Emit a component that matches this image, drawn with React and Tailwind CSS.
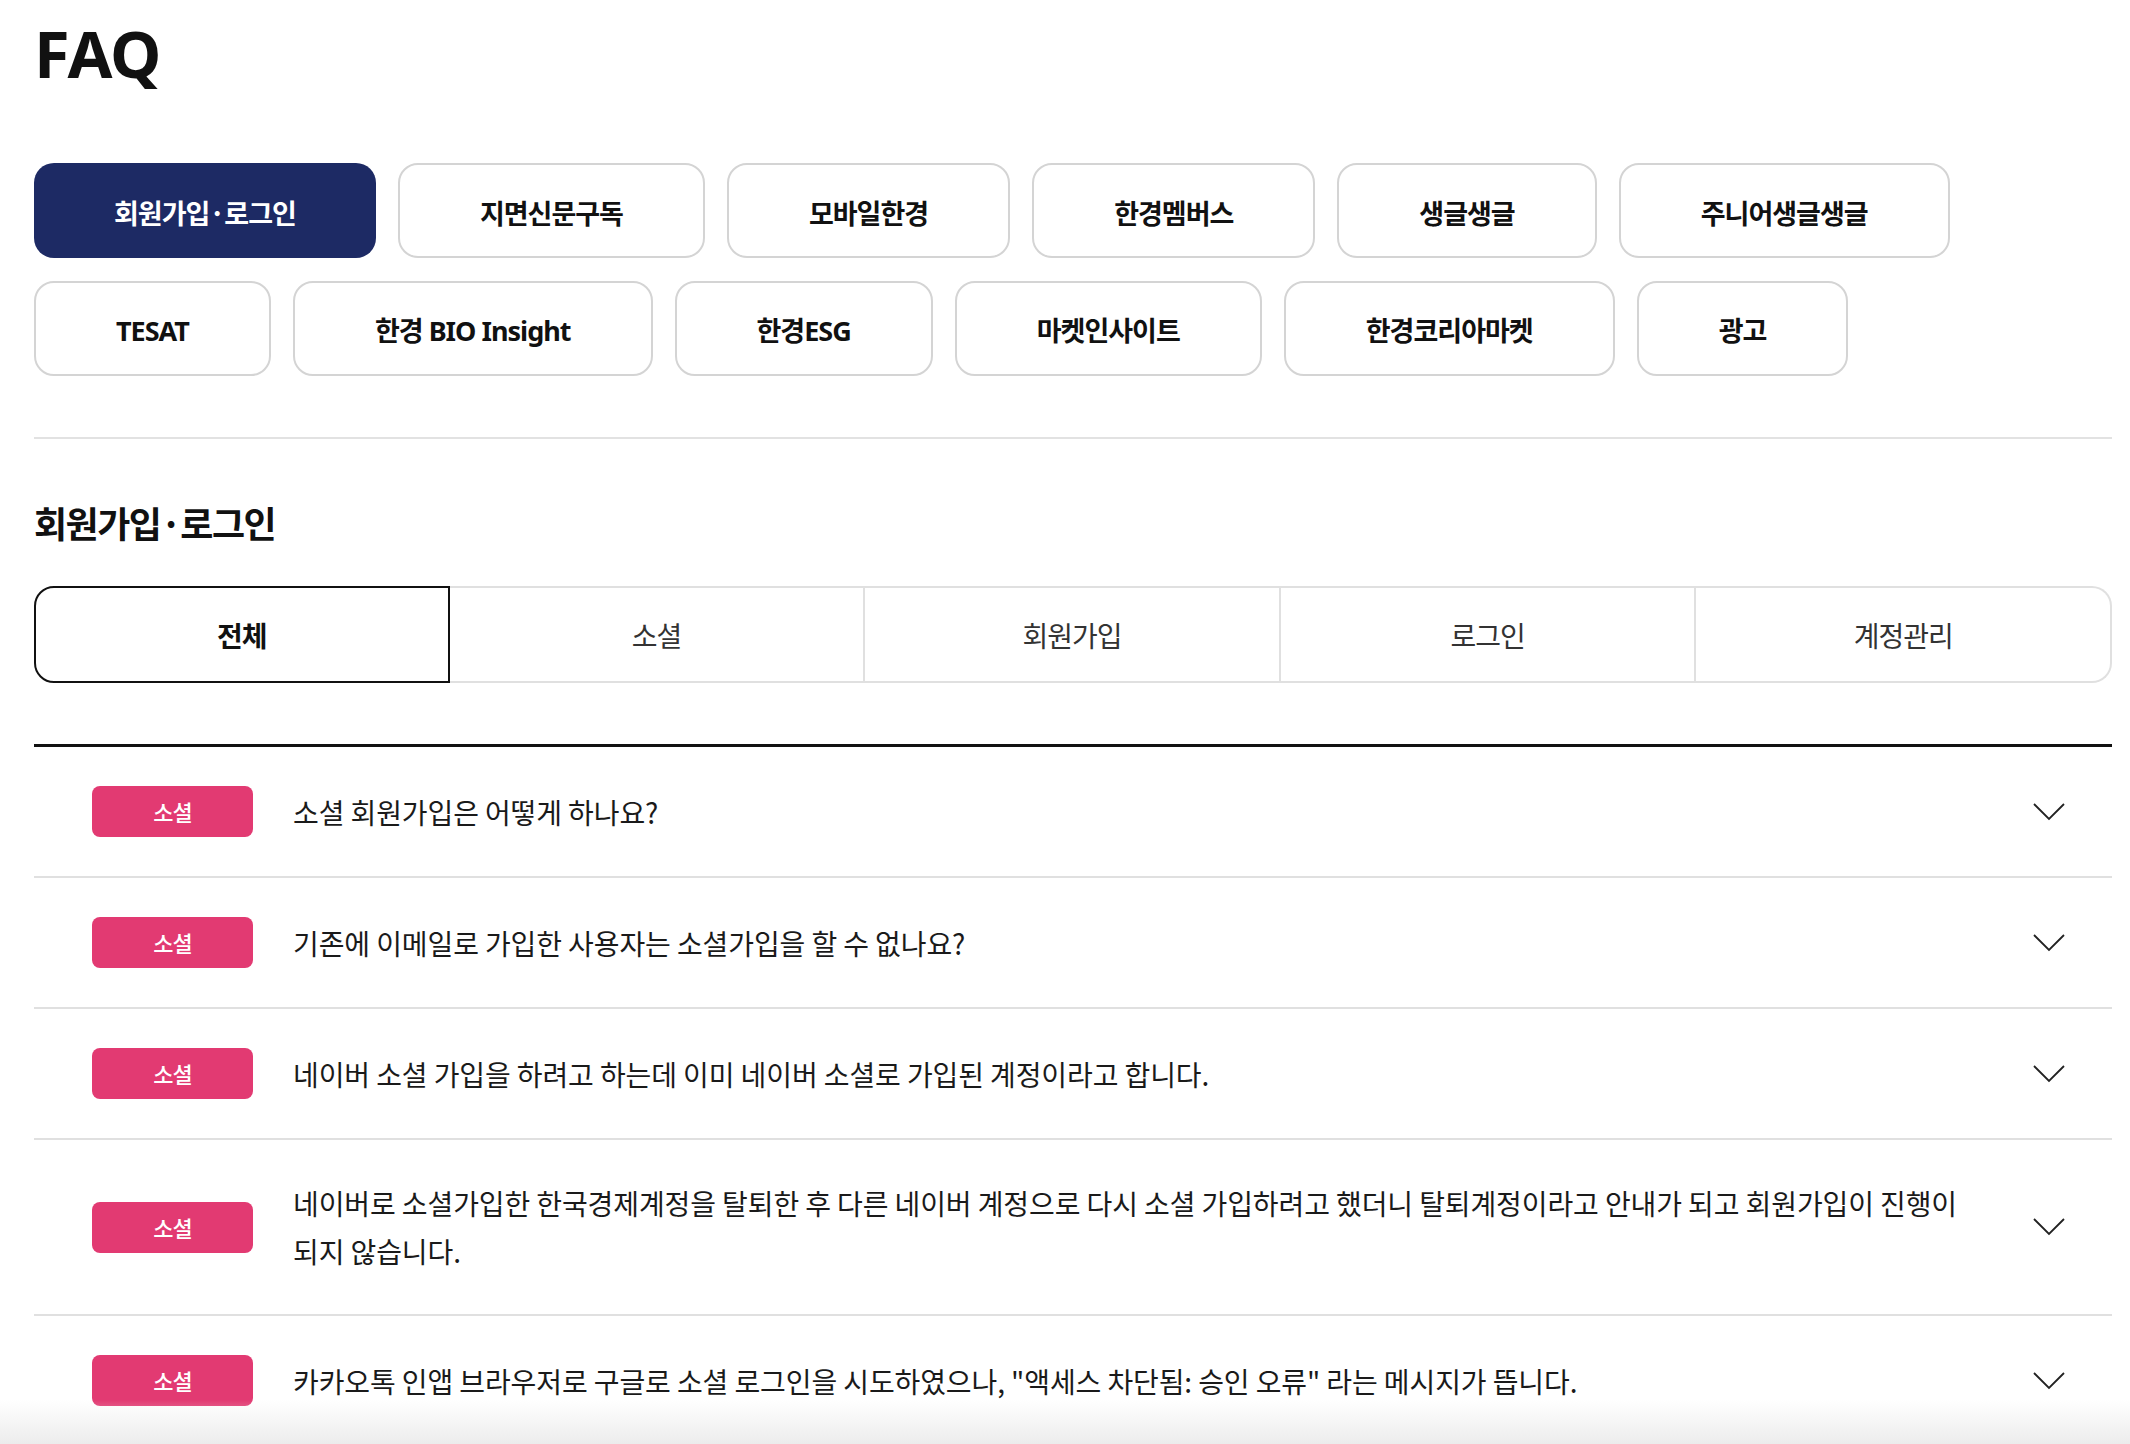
import { useState } from "react";

const categories = [
  [
    ["회원가입·로그인", true],
    ["지면신문구독"],
    ["모바일한경"],
    ["한경멤버스"],
    ["생글생글"],
    ["주니어생글생글"],
  ],
  [
    ["TESAT"],
    ["한경 BIO Insight"],
    ["한경ESG"],
    ["마켓인사이트"],
    ["한경코리아마켓"],
    ["광고"],
  ],
];

const tabs = ["전체", "소셜", "회원가입", "로그인", "계정관리"];

const faqs = [
  "소셜 회원가입은 어떻게 하나요?",
  "기존에 이메일로 가입한 사용자는 소셜가입을 할 수 없나요?",
  "네이버 소셜 가입을 하려고 하는데 이미 네이버 소셜로 가입된 계정이라고 합니다.",
  "네이버로 소셜가입한 한국경제계정을 탈퇴한 후 다른 네이버 계정으로 다시 소셜 가입하려고 했더니 탈퇴계정이라고 안내가 되고 회원가입이 진행이 되지 않습니다.",
  '카카오톡 인앱 브라우저로 구글로 소셜 로그인을 시도하였으나, "액세스 차단됨: 승인 오류" 라는 메시지가 뜹니다.',
];

function Chevron() {
  return (
    <svg width="34" height="20" viewBox="0 0 34 20" fill="none" className="shrink-0">
      <polyline points="2,2 17,17 32,2" stroke="#222" strokeWidth="1.8" />
    </svg>
  );
}

export default function App() {
  const [tab, setTab] = useState(0);

  return (
    <div className="relative h-[1444px] overflow-hidden bg-white pl-[34px] pr-[18px] text-[#111] font-['Noto_Sans_CJK_KR',sans-serif]">
      <h1 className="pt-[21px] text-[65px] font-bold leading-none tracking-[-1px] font-['Noto_Sans','Noto_Sans_CJK_KR',sans-serif]">
        FAQ
      </h1>

      <div className="mt-[77px] flex flex-col gap-[23px]">
        {categories.map((row, i) => (
          <div
            key={i}
            className={`flex gap-[22px] ${
              i === 1 ? "font-['Noto_Sans','Noto_Sans_CJK_KR',sans-serif]" : ""
            }`}
          >
            {row.map(([label, active]) => (
              <button
                key={label}
                type="button"
                className={`h-[95px] px-[80px] pt-[5px] rounded-[20px] text-[27px] font-bold tracking-[-1px] ${
                  active
                    ? "bg-[#1d2a64] text-white"
                    : "bg-white border-2 border-[#d4d4d4] text-[#111]"
                }`}
              >
                {label}
              </button>
            ))}
          </div>
        ))}
      </div>

      <div className="mt-[61px] h-[2px] bg-[#e2e2e2]" />

      <h2 className="mt-[60px] text-[36px] font-bold leading-[46px] tracking-[-1.5px]">
        회원가입·로그인
      </h2>

      <div className="mt-[41px] grid grid-cols-5 h-[97px]">
        {tabs.map((t, i) => (
          <button
            key={t}
            type="button"
            onClick={() => setTab(i)}
            className={`text-[28px] tracking-[-1px] ${
              i === tab
                ? "border-2 border-[#111] font-bold text-[#111]"
                : "border-y-2 border-r-2 border-[#e0e0e0] text-[#333]"
            } ${i === 0 ? "rounded-l-[20px]" : ""} ${i === 4 ? "rounded-r-[20px]" : ""}`}
          >
            {t}
          </button>
        ))}
      </div>

      <div className="mt-[61px] border-t-[3px] border-[#111]">
        {faqs.map((q) => (
          <div
            key={q}
            className="flex items-center border-b-2 border-[#e0e0e0] py-[39px] pl-[58px] pr-[46px]"
          >
            <span className="flex h-[51px] w-[161px] shrink-0 items-center justify-center rounded-[8px] bg-[#e23a72] text-[22px] font-medium text-white tracking-[-1px]">
              소셜
            </span>
            <p className="ml-[40px] mr-[40px] flex-1 break-keep text-[28px] leading-[48px] text-[#1a1a1a] tracking-[-0.1px]">
              {q}
            </p>
            <Chevron />
          </div>
        ))}
      </div>

      <div className="pointer-events-none absolute inset-x-0 bottom-0 h-[44px] bg-gradient-to-b from-white/0 to-[#ececec]" />
    </div>
  );
}
